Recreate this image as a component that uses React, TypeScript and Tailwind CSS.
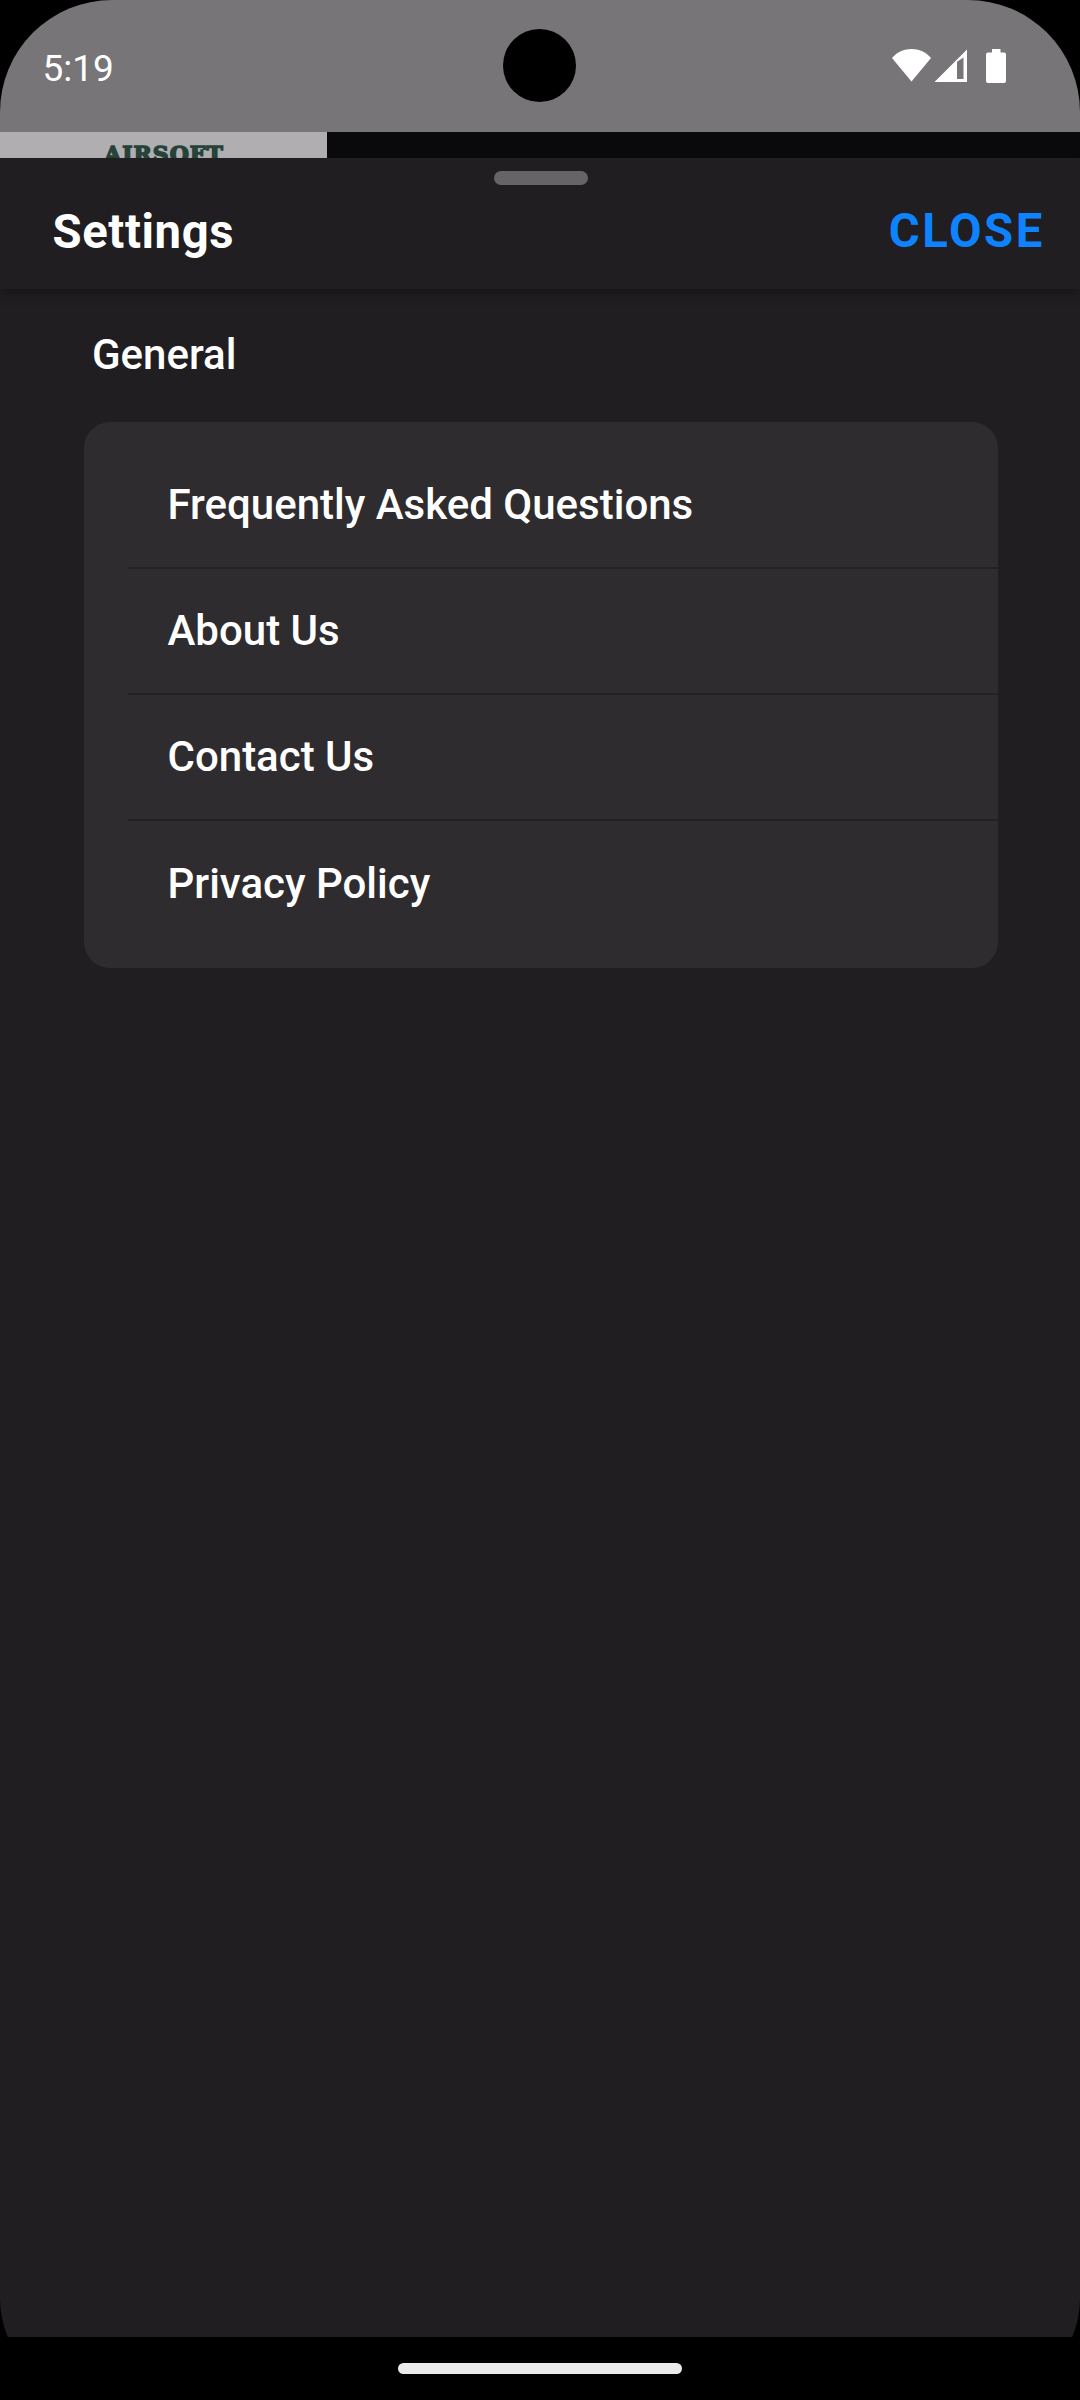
const generalItems = [
  "Frequently Asked Questions",
  "About Us",
  "Contact Us",
  "Privacy Policy",
];

function StatusIcons() {
  return (
    <svg width="116" height="36" viewBox="0 0 116 36" fill="#ffffff" aria-hidden="true">
      <path d="M0 10C5 4 12 1 19.5 1S34 4 39 10L19.5 33.500Z" />
      <path
        fillRule="evenodd"
        d="M42.500 34L75 1.500V34ZM65 13.700V31H71.500V9.500Z"
      />
      <path d="M100 1H108.500V4.500H112Q114 4.500 114 6.500V33Q114 35 112 35H96Q94 35 94 33V6.500Q94 4.500 96 4.500H100Z" />
    </svg>
  );
}

function StatusBar() {
  return (
    <div className="relative flex h-[132px] items-center justify-between bg-[#777578] pr-[72px] pl-[42.500px]">
      <span className="pt-[5px] text-[37px] leading-none text-white">5:19</span>
      <div className="absolute top-[29px] left-[503px] size-[73px] rounded-full bg-black" />
      <StatusIcons />
    </div>
  );
}

function PageBehind() {
  return (
    <div className="flex h-[26px] overflow-hidden bg-[#0a090b]">
      <div className="flex w-[327px] justify-center bg-[#b0aeb0] pt-[9px] pl-px">
        <span className="font-['DejaVu_Serif'] text-[22px] leading-[26px] font-bold tracking-[1px] text-[#26433a] [-webkit-text-stroke:1.5px_#26433a]">
          AIRSOFT
        </span>
      </div>
    </div>
  );
}

function SheetHeader() {
  return (
    <header className="relative flex h-[131px] items-center justify-between bg-[#201e21] pt-4 pr-[35px] pl-[52.500px] shadow-[0_8px_8px_-2px_#18171a]">
      <div className="absolute top-[13px] left-[494px] h-[14px] w-[94px] rounded-full bg-[#666467]" />
      <h1 className="pt-0.5 text-[47.250px] leading-none font-bold tracking-[0.600px] text-white">
        Settings
      </h1>
      <button className="text-[47.250px] leading-none font-bold tracking-[2.600px] text-[#0f82fd]">
        CLOSE
      </button>
    </header>
  );
}

function GeneralSection() {
  return (
    <section className="pr-[82px] pl-[84px]">
      <h2 className="flex h-[133px] items-center pb-px pl-2 text-[42px] leading-none font-medium text-white">
        General
      </h2>
      <ul className="rounded-[26px] bg-[#2e2c2f] py-[21px]">
        {generalItems.map((item) => (
          <li
            key={item}
            className="ml-11 flex h-[126px] items-center border-b-2 border-[#232124] pl-[39.500px] text-[42px] leading-none font-medium text-white last:border-b-0"
          >
            {item}
          </li>
        ))}
      </ul>
    </section>
  );
}

export default function App() {
  return (
    <div className="h-[2400px] w-[1080px] bg-black font-['Roboto',sans-serif]">
      <div className="flex h-full flex-col overflow-hidden rounded-t-[112px] rounded-b-[102px]">
        <StatusBar />
        <PageBehind />
        <main className="h-[2179px] bg-[#201e21]">
          <SheetHeader />
          <GeneralSection />
        </main>
        <div className="flex h-[63px] justify-center bg-black pt-[26px]">
          <div className="h-[11px] w-[284px] rounded-full bg-[#ebe9ec]" />
        </div>
      </div>
    </div>
  );
}
